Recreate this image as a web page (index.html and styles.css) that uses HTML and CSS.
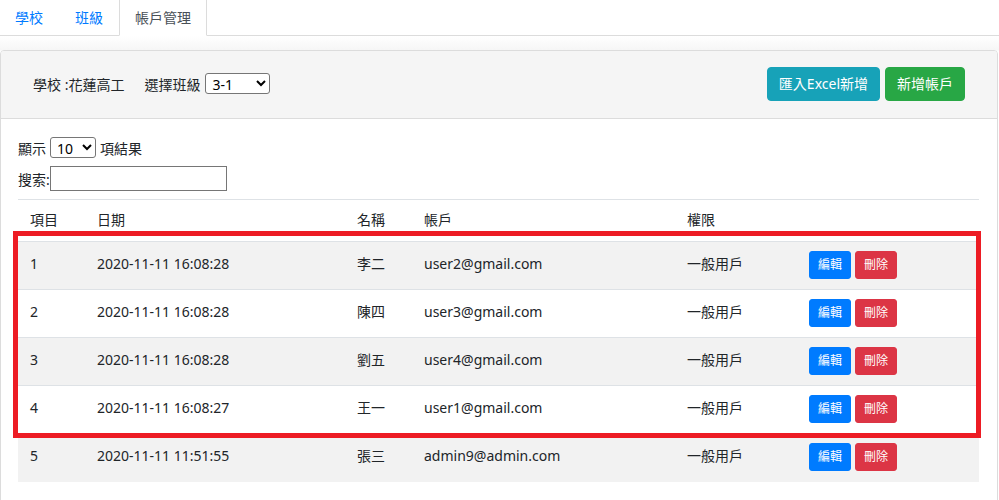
FILE: index.html
```html
<!DOCTYPE html>
<html lang="zh-Hant">
<head>
<meta charset="utf-8">
<title>帳戶管理</title>
<link rel="stylesheet" href="styles.css">
</head>
<body>
<nav class="tabs">
  <a class="tab">學校</a>
  <a class="tab">班級</a>
  <a class="tab active">帳戶管理</a>
</nav>
<div class="content">
  <section class="card">
    <header class="card-header">
      <div class="filters">
        <span class="school">學校 :花蓮高工</span>
        <label class="class-pick">選擇班級 <select class="sel sel-class"><option>3-1</option></select></label>
      </div>
      <div class="actions">
        <button class="btn btn-info">匯入Excel新增</button>
        <button class="btn btn-success">新增帳戶</button>
      </div>
    </header>
    <div class="card-body">
      <div class="length">顯示 <select class="sel sel-len"><option>10</option></select> 項結果</div>
      <div class="search">搜索:<input class="search-input" type="text"></div>
      <div class="table-wrap">
        <table class="grid">
          <colgroup>
            <col class="c1"><col class="c2"><col class="c3"><col class="c4"><col class="c5"><col class="c6">
          </colgroup>
          <thead>
            <tr><th>項目</th><th>日期</th><th>名稱</th><th>帳戶</th><th>權限</th><th></th></tr>
          </thead>
          <tbody>
            <tr><td>1</td><td>2020-11-11 16:08:28</td><td>李二</td><td>user2@gmail.com</td><td>一般用戶</td><td><div class="ops"><button class="sbtn edit">編輯</button><button class="sbtn del">刪除</button></div></td></tr>
            <tr><td>2</td><td>2020-11-11 16:08:28</td><td>陳四</td><td>user3@gmail.com</td><td>一般用戶</td><td><div class="ops"><button class="sbtn edit">編輯</button><button class="sbtn del">刪除</button></div></td></tr>
            <tr><td>3</td><td>2020-11-11 16:08:28</td><td>劉五</td><td>user4@gmail.com</td><td>一般用戶</td><td><div class="ops"><button class="sbtn edit">編輯</button><button class="sbtn del">刪除</button></div></td></tr>
            <tr><td>4</td><td>2020-11-11 16:08:27</td><td>王一</td><td>user1@gmail.com</td><td>一般用戶</td><td><div class="ops"><button class="sbtn edit">編輯</button><button class="sbtn del">刪除</button></div></td></tr>
            <tr><td>5</td><td>2020-11-11 11:51:55</td><td>張三</td><td>admin9@admin.com</td><td>一般用戶</td><td><div class="ops"><button class="sbtn edit">編輯</button><button class="sbtn del">刪除</button></div></td></tr>
          </tbody>
        </table>
      </div>
    </div>
  </section>
  <div class="highlight"></div>
</div>
</body>
</html>
```

FILE: styles.css
```css
* { box-sizing: border-box; }
html, body { margin: 0; padding: 0; background: #fff; }
body {
  font-family: "Segoe UI", "Noto Sans", "Noto Sans CJK TC", sans-serif;
  font-size: 14px;
  color: #212529;
  width: 999px;
  height: 500px;
  overflow: hidden;
  position: relative;
}

.tabs {
  display: flex;
  height: 36px;
  border-bottom: 1px solid #dcdcdc;
  margin-left: -1px;
}
.tab {
  display: block;
  padding: 8px 15px 7px;
  line-height: 20px;
  border: 1px solid transparent;
  border-top: 0;
  color: #007bff;
  cursor: pointer;
}
.tab.active {
  color: #495057;
  background: #fff;
  border-color: #dcdcdc;
  border-bottom: 1px solid #fff;
  margin-bottom: -1px;
}

.content {
  padding-top: 14px;
  background: linear-gradient(#ffffff, #f6f6f6 14px, #ffffff 15px);
}
.card {
  width: 998px;
  min-height: 500px;
  border: 1px solid #dcdcdc;
  border-radius: 4px;
  background: #fff;
  overflow: hidden;
}
.card-header {
  height: 68px;
  background: #f5f5f5;
  border-bottom: 1px solid #dcdcdc;
  display: flex;
  align-items: center;
  justify-content: space-between;
  padding: 0 32px 2px 32px;
}
.filters { display: flex; align-items: center; gap: 20px; }
.class-pick { display: flex; align-items: center; gap: 5px; }
.actions { display: flex; gap: 5px; }
.btn {
  font: inherit;
  font-size: 14px;
  color: #fff;
  border: 1px solid transparent;
  border-radius: 4px;
  padding: 6px 11px;
  line-height: 20px;
  height: 34px;
  cursor: pointer;
}
.btn-info { background: #17a2b8; border-color: #17a2b8; }
.btn-success { background: #28a745; border-color: #28a745; }

.sel {
  font-family: inherit;
  font-size: 14px;
  height: 21px;
  border: 1px solid #767676;
  border-radius: 3px;
  background: #fff;
  color: #000;
  padding: 0 0 0 2px;
}
.sel-class { width: 65px; }
.sel-len { width: 46px; }

.card-body { padding: 18px 17px 0; }
.length { display: flex; align-items: center; gap: 4px; height: 21px; }
.search { display: flex; align-items: center; margin-top: 8px; height: 25px; }
.search-input {
  width: 177px;
  height: 25px;
  border: 1px solid #767676;
  padding: 1px 2px;
  font: inherit;
}
.table-wrap { margin-top: 8px; }
.grid {
  width: 961px;
  border-collapse: collapse;
  table-layout: fixed;
  border-top: 1px solid #dee2e6;
}
.c1 { width: 67px; }
.c2 { width: 260px; }
.c3 { width: 67px; }
.c4 { width: 263px; }
.c5 { width: 122px; }
.c6 { width: 182px; }
.grid th {
  font-weight: normal;
  text-align: left;
  padding: 9px 12px 10px;
  line-height: 22px;
}
.grid td {
  padding: 9px 12px 10px;
  line-height: 26px;
  height: 48px;
  border-top: 1px solid #dee2e6;
  vertical-align: top;
  white-space: nowrap;
}
.grid tbody tr:nth-child(odd) { background: #f2f2f2; }
.ops { display: flex; gap: 4px; height: 28px; }
.sbtn {
  font: inherit;
  font-size: 12px;
  line-height: 18px;
  height: 28px;
  padding: 4px 8px;
  color: #fff;
  border: 1px solid transparent;
  border-radius: 3px;
  cursor: pointer;
}
.sbtn.edit { background: #007bff; border-color: #007bff; }
.sbtn.del { background: #dc3545; border-color: #dc3545; }

.highlight {
  position: absolute;
  left: 13px;
  top: 231px;
  width: 968px;
  height: 207px;
  border: 5px solid #ed1c24;
  pointer-events: none;
}
```
